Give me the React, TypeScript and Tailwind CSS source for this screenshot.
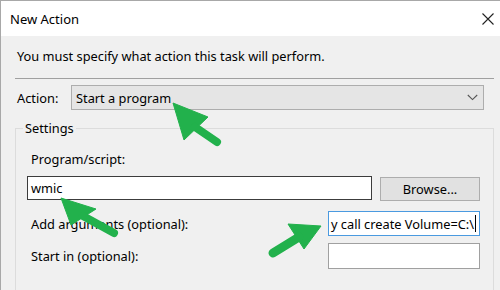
import React from "react";

const font = "font-['Noto_Sans',_'Open_Sans',_sans-serif]";

export default function App() {
  return (
    <div
      className={`relative w-[500px] h-[290px] overflow-hidden bg-[#f0f0f0] border-l border-t border-[#a8a8a8] text-[12.8px] leading-[16px] text-black ${font}`}
    >
      {/* Title bar */}
      <div className="flex h-[35px] items-center justify-between bg-white pl-[9px] pr-[4px]">
        <span className="text-[13px]">New Action</span>
        <svg width="14" height="14" viewBox="0 0 14 14" className="mr-[1px]">
          <path d="M1.5 1.5 L12.5 12.5 M12.5 1.5 L1.5 12.5" stroke="#222" strokeWidth="1.1" />
        </svg>
      </div>

      {/* Body */}
      <div className="flex flex-col pl-[14px] pr-[6px]">
        <p className="mt-[12px] ml-[2px]">You must specify what action this task will perform.</p>
        <div className="mt-[14px] h-px bg-[#a0a0a0]" />

        {/* Action row */}
        <div className="mt-[6px] flex items-center">
          <span className="ml-[2px] w-[54px]">Action:</span>
          <div className="flex h-[25px] flex-1 items-center justify-between border border-[#adadad] bg-[#e5e5e5] pl-[4px] pr-[5px] mr-[10px]">
            <span>Start a program</span>
            <svg width="11" height="7" viewBox="0 0 11 7">
              <path d="M0.8 1 L5.5 5.6 L10.2 1" fill="none" stroke="#555" strokeWidth="1.1" />
            </svg>
          </div>
        </div>

        {/* Settings group */}
        <div className="mt-[18px] flex h-[200px] flex-col border border-[#dcdcdc] pl-[11px] pr-[13px]">
          <span className="-mt-[9px] -ml-[4px] w-fit bg-[#f0f0f0] px-[2px]">Settings</span>

          <span className="mt-[15px] ml-[4px]">Program/script:</span>
          <div className="mt-[9px] flex items-start">
            <div className="flex h-[24px] flex-1 items-center border border-[#3c3c3c] bg-white pl-[3px]">
              wmic
            </div>
            <button className="ml-[8px] mt-[1px] flex h-[24px] w-[100px] items-center justify-center border border-[#adadad] bg-[#e1e1e1]">
              Browse...
            </button>
          </div>

          <div className="mt-[10px] flex items-center">
            <span className="ml-[4px] flex-1">Add arguments (optional):</span>
            <div className="flex h-[25px] w-[152px] items-center overflow-hidden whitespace-nowrap border border-[#4a9ae0] bg-white pl-[2px]">
              <span>y call create Volume=C:\</span>
              <span className="ml-[1px] inline-block h-[17px] w-px bg-black" />
            </div>
          </div>

          <div className="mt-[7px] flex items-center">
            <span className="ml-[4px] flex-1">Start in (optional):</span>
            <div className="h-[26px] w-[152px] border border-[#a0a0a0] bg-white" />
          </div>
        </div>
      </div>

      {/* Green annotation arrows */}
      <svg
        className="pointer-events-none absolute left-0 top-0"
        width="500"
        height="290"
        viewBox="0 0 500 290"
      >
        <g fill="#22b14c" stroke="#22b14c" strokeLinejoin="round">
          <polygon points="172,102 207,116 183,139" strokeWidth="1" />
          <line x1="194" y1="126" x2="216" y2="141" strokeWidth="8" strokeLinecap="round" />

          <polygon points="60,197 95,208 70,224" strokeWidth="1" />
          <line x1="82" y1="215" x2="113" y2="232" strokeWidth="8" strokeLinecap="round" />

          <polygon points="320,225 287,223 303,248" strokeWidth="1" />
          <line x1="298" y1="236" x2="272" y2="252" strokeWidth="9" strokeLinecap="round" />
        </g>
      </svg>
    </div>
  );
}
